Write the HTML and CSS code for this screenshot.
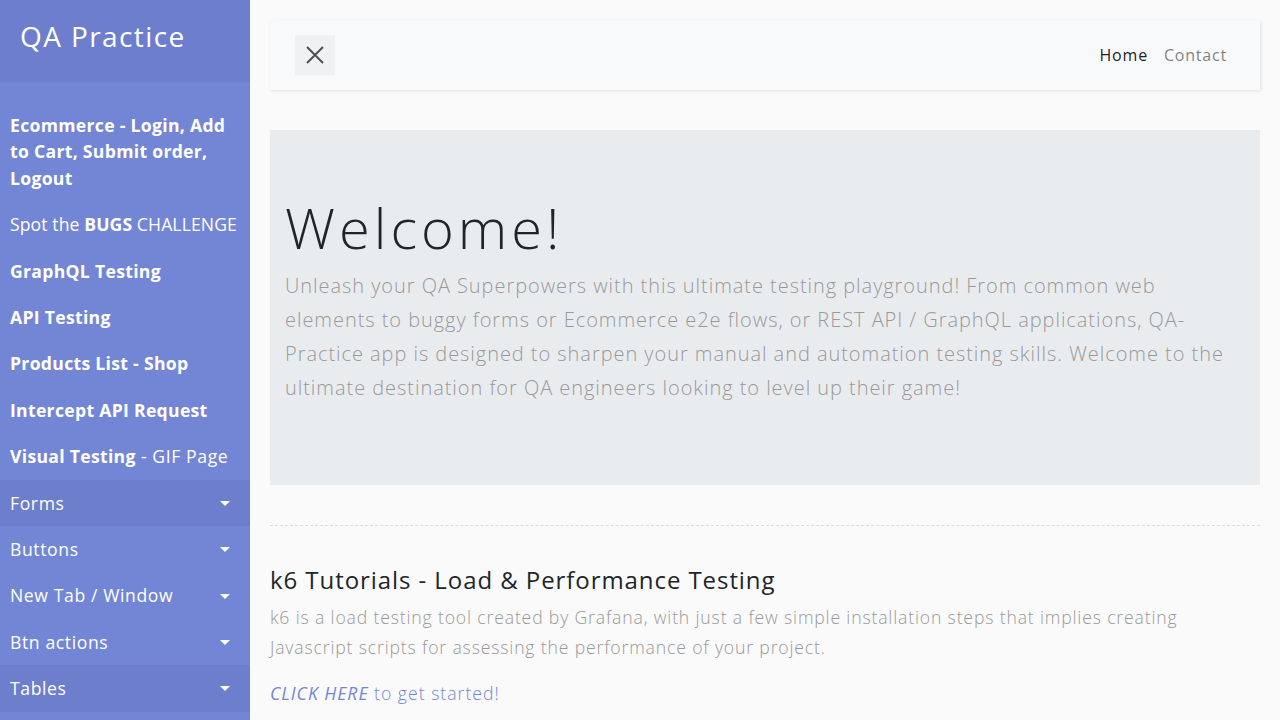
FILE: index.html
```html
<!DOCTYPE html>
<html lang="en">
<head>
<meta charset="utf-8">
<title>QA Practice</title>
<link rel="stylesheet" href="styles.css">
</head>
<body>
<div class="wrapper">
  <nav class="sidebar">
    <div class="sidebar-header"><h3>QA Practice</h3></div>
    <ul class="components">
      <li><a class="b" href="#">Ecommerce - Login, Add to Cart, Submit order, Logout</a></li>
      <li><a class="tight" href="#">Spot the <b>BUGS</b> CHALLENGE</a></li>
      <li><a class="b" href="#">GraphQL Testing</a></li>
      <li><a class="b" href="#">API Testing</a></li>
      <li><a class="b" href="#">Products List - Shop</a></li>
      <li><a class="b" href="#">Intercept API Request</a></li>
      <li><a href="#"><b>Visual Testing</b> - GIF Page</a></li>
      <li class="active"><a class="dd" href="#">Forms</a></li>
      <li><a class="dd" href="#">Buttons</a></li>
      <li><a class="dd" href="#">New Tab / Window</a></li>
      <li><a class="dd" href="#">Btn actions</a></li>
      <li class="active"><a class="dd" href="#">Tables</a></li>
    </ul>
  </nav>
  <main class="content">
    <nav class="navbar">
      <button class="toggle" type="button" aria-label="Toggle sidebar">
        <svg width="20" height="20" viewBox="0 0 20 20"><path d="M2 2 L18 18 M18 2 L2 18" stroke="#505050" stroke-width="2" fill="none"/></svg>
      </button>
      <ul class="nav-links">
        <li><a class="nav-link current" href="#">Home</a></li>
        <li><a class="nav-link" href="#">Contact</a></li>
      </ul>
    </nav>
    <section class="jumbotron">
      <h1 class="display">Welcome!</h1>
      <p class="lead">Unleash your QA Superpowers with this ultimate testing playground! From common web elements to buggy forms or Ecommerce e2e flows, or REST API / GraphQL applications, QA-Practice app is designed to sharpen your manual and automation testing skills. Welcome to the ultimate destination for QA engineers looking to level up their game!</p>
    </section>
    <div class="line"></div>
    <h4 class="section-title">k6 Tutorials - Load &amp; Performance Testing</h4>
    <p class="text">k6 is a load testing tool created by Grafana, with just a few simple installation steps that implies creating Javascript scripts for assessing the performance of your project.</p>
    <p class="text link"><a href="#"><b><i>CLICK HERE</i></b> to get started!</a></p>
  </main>
</div>
</body>
</html>
```
FILE: styles.css
```css
* { box-sizing: border-box; }
html, body { margin: 0; padding: 0; }
body {
  font-family: "Open Sans", "Liberation Sans", sans-serif;
  background: #fafafa;
  color: #212529;
  font-size: 16px;
  line-height: 1.5;
  overflow: hidden;
}
a { text-decoration: none; color: inherit; }
.wrapper { display: flex; align-items: stretch; min-height: 100vh; }

.sidebar {
  width: 250px;
  min-width: 250px;
  background: #7386d5;
  color: #fff;
}
.sidebar-header {
  background: #6d7fcc;
  padding: 20px;
  height: 82px;
}
.sidebar-header h3 {
  margin: 0;
  font-size: 28px;
  font-weight: 500;
  line-height: 33.6px;
  letter-spacing: 1.4px;
}
.components {
  list-style: none;
  margin: 0;
  padding: 20px 0;
}
.components a {
  display: block;
  padding: 10px;
  font-size: 17.6px;
  line-height: 26.4px;
  font-weight: 400;
  letter-spacing: 0.6px;
  position: relative;
}
.components a.b, .components b { font-weight: 700; letter-spacing: 0.3px; }
.components a.tight, .components a.tight b { letter-spacing: 0.1px; white-space: nowrap; }
.components li.active > a { background: #6d7fcc; }
.components a.dd::after {
  content: "";
  position: absolute;
  right: 20px;
  top: 50%;
  margin-top: -2px;
  border-top: 5px solid #fff;
  border-left: 5px solid transparent;
  border-right: 5px solid transparent;
}

.content { flex: 1; padding: 20px; min-width: 0; }

.navbar {
  display: flex;
  align-items: center;
  justify-content: space-between;
  background: #f8f9fa;
  padding: 15px 25px;
  height: 70px;
  box-shadow: 1px 1px 3px rgba(0,0,0,0.1);
  margin-bottom: 40px;
}
.toggle {
  width: 40px;
  height: 40px;
  border: none;
  background: #f0f1f2;
  display: flex;
  align-items: center;
  justify-content: center;
  padding: 0;
}
.nav-links { list-style: none; display: flex; margin: 0; padding: 0; }
.nav-link {
  display: block;
  padding: 8px;
  font-size: 16px;
  letter-spacing: 0.8px;
  color: rgba(0,0,0,0.5);
}
.nav-link.current { color: rgba(0,0,0,0.9); }

.jumbotron {
  background: #e9ecef;
  padding: 64px 15px;
}
.display {
  margin: 0 0 8px;
  font-size: 56px;
  font-weight: 300;
  line-height: 67.2px;
  letter-spacing: 4px;
}
.lead {
  margin: 0 0 16px;
  font-size: 20px;
  font-weight: 300;
  line-height: 34px;
  letter-spacing: 0.95px;
  color: #999;
}
.line {
  height: 0;
  border-bottom: 1px dashed #ddd;
  margin: 40px 0;
}
.section-title {
  margin: 0 0 8px;
  font-size: 24px;
  font-weight: 500;
  line-height: 28.8px;
  letter-spacing: 0.93px;
  color: #212529;
}
.text {
  margin: 0 0 16px;
  font-size: 17.6px;
  font-weight: 300;
  line-height: 29.9px;
  letter-spacing: 0.85px;
  color: #999;
}
.text.link a { color: #7386d5; letter-spacing: 1px; }
```
